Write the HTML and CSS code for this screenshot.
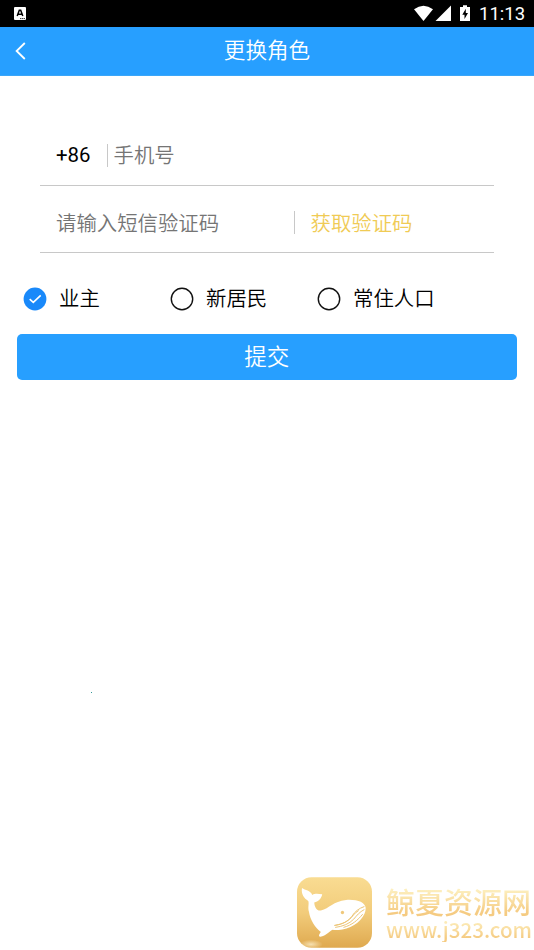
FILE: index.html
```html
<!DOCTYPE html>
<html lang="zh-CN">
<head>
<meta charset="utf-8">
<title>更换角色</title>
<link rel="stylesheet" href="styles.css">
</head>
<body>
<div class="status">
  <svg class="app-icon" viewBox="0 0 12 13"><rect width="12" height="13" rx="1" fill="#fff"/><path d="M3.2 9 5.3 3.2h1.4L8.8 9M4.2 7.2h3.6" fill="none" stroke="#000" stroke-width="1.5"/><path d="M6 11.6h5" stroke="#000" stroke-width=".8" stroke-dasharray="1.5 .5"/></svg>
  <div class="status-right">
    <svg class="signals" viewBox="0 0 58 18"><path d="M0 4.2Q9.5-2.8 19 4.2L9.5 16Z" fill="#fff"/><path d="M37 .5V16H21.500Z" fill="#fff"/><path d="M46 2h3V.3h4V2h3v14H46Z" fill="#fff"/><path d="M51.800 3.800 48.300 9.700h2.200v4.200L54 8h-2.200Z" fill="#000"/></svg>
    <span class="time">11:13</span>
  </div>
</div>
<header class="header">
  <svg class="back" viewBox="0 0 12 18"><path d="M10.800 1 2.600 9l8.200 8" fill="none" stroke="#fff" stroke-width="1.800"/></svg>
  <h1 class="title">更换角色</h1>
</header>
<main class="main">
  <div class="field field-phone">
    <span class="code">+86</span>
    <span class="divider"></span>
    <span class="placeholder">手机号</span>
  </div>
  <div class="field field-sms">
    <span class="placeholder sms">请输入短信验证码</span>
    <span class="divider"></span>
    <span class="get-code">获取验证码</span>
  </div>
  <div class="roles">
    <div class="role"><svg class="radio" viewBox="0 0 24 24"><circle cx="12" cy="12" r="11.400" fill="#1989fa"/><path d="m6.700 12.200 3.600 3.200 7.400-7" fill="none" stroke="#fff" stroke-width="1.600"/></svg><span>业主</span></div>
    <div class="role"><svg class="radio" viewBox="0 0 24 24"><circle cx="12" cy="12" r="10.700" fill="none" stroke="#111" stroke-width="1.400"/></svg><span>新居民</span></div>
    <div class="role"><svg class="radio" viewBox="0 0 24 24"><circle cx="12" cy="12" r="10.700" fill="none" stroke="#111" stroke-width="1.400"/></svg><span>常住人口</span></div>
  </div>
  <div class="submit">提交</div>
</main>
<i class="speck"></i>
<div class="watermark">
  <svg class="whale" viewBox="36 36 226 212">
    <defs><linearGradient id="gold" x1="0" y1="0" x2="0" y2="1"><stop offset="0" stop-color="#f9dc92"/><stop offset=".5" stop-color="#f2cc7b"/><stop offset="1" stop-color="#dfa94f"/></linearGradient>
    <radialGradient id="glow"><stop offset="0" stop-color="#fff6d8" stop-opacity=".7"/><stop offset="1" stop-color="#fff6d8" stop-opacity="0"/></radialGradient></defs>
    <rect x="36" y="36" width="226" height="212" rx="44" fill="url(#gold)"/>
    <ellipse cx="78" cy="238" rx="36" ry="14" fill="url(#glow)"/>
    <path d="M51 68C61 76 76 74 82 89C91 84 100 86 112 87C109 101 100 109 88 112C89 127 96 138 108 136C134 129 145 108 184 104C218 102 241 111 243 128C244 153 218 181 185 190C167 195 154 196 143 194C132 199 125 212 106 215C100 215 102 208 108 201C91 188 76 166 72 140C68 125 73 116 70 107C57 99 48 86 51 68Z" fill="#fff"/>
    <g fill="none" stroke="#ecc575" stroke-width="3"><path d="M239 124C222 130 211 138 201 154C190 169 172 178 151 181"/><path d="M239 133C224 141 217 150 207 162C194 176 174 184 151 187"/><path d="M234 147C219 165 202 180 176 187"/><path d="M222 136C208 144 204 154 194 163C180 174 166 178 148 181"/></g>
    <circle cx="173" cy="142" r="5" fill="#efc87b"/>
  </svg>
  <div class="brand"><div class="brand-name">鲸夏资源网</div><div class="brand-url">www.j323.com</div></div>
</div>
</body>
</html>
```
FILE: styles.css
```css
* { box-sizing: border-box; }
body {
  margin: 0;
  height: 950px;
  overflow: hidden;
  background: #fff;
  color: #111;
  font-family: Roboto, "Noto Sans CJK SC", sans-serif;
  font-weight: 350;
}
svg { display: block; flex: none; }
.status {
  height: 27px;
  padding: 0 9px 0 14px;
  background: #000;
  display: flex;
  align-items: center;
  justify-content: space-between;
}
.app-icon { width: 12px; height: 13px; }
.status-right { display: flex; align-items: center; }
.signals { width: 58px; height: 18px; margin-top: 1px; }
.time {
  width: 46px;
  margin-left: 7px;
  padding-top: 1px;
  color: #fff;
  font-size: 18.5px;
  font-weight: 400;
  line-height: 26px;
  white-space: nowrap;
}
.header {
  height: 49px;
  padding: 0 14px;
  background: #279fff;
  border-bottom: 1px solid #3ba6f8;
  display: grid;
  grid-template-columns: 12px 1fr 12px;
  align-items: center;
}
.back { width: 12px; height: 18px; margin-top: -1px; }
.title {
  margin: 0;
  color: #fff;
  font-size: 21.6px;
  font-weight: 350;
  line-height: 46px;
  text-align: center;
}
.main { padding: 42px 17px 0 16.5px; }
.field {
  height: 67px;
  margin: 0 23.500px;
  padding: 7px 16px 0;
  border-bottom: 1px solid #c8c8c8;
  display: flex;
  align-items: center;
  font-size: 20.4px;
  line-height: 30px;
}
.field-phone { height: 68px; }
.code { width: 50.500px; font-weight: 400; color: #000; }
.divider { width: 1px; height: 23px; background: #c8c8c8; }
.placeholder { margin-left: 6px; padding-top: 2px; color: #757575; }
.sms { width: 237.500px; margin-left: 0; }
.get-code { margin-left: 16px; padding-top: 2px; color: #f0cb55; }
.roles {
  height: 81px;
  padding: 10px 0 0 6.500px;
  display: grid;
  grid-template-columns: 147px 147px 1fr;
  align-items: center;
}
.role {
  display: flex;
  align-items: center;
  gap: 12px;
  color: #000;
  font-size: 20.4px;
  line-height: 30px;
}
.role span { padding-top: 1px; }
.radio { width: 24px; height: 24px; }
.submit {
  height: 45.500px;
  border-radius: 5px;
  background: #279fff;
  color: #fff;
  font-size: 22.500px;
  line-height: 46px;
  text-align: center;
}
.speck { position: absolute; left: 91px; top: 692px; width: 1px; height: 1px; background: #399; }
.watermark {
  position: absolute;
  left: 297px;
  top: 877px;
  display: flex;
}
.whale { width: 75px; height: 71px; }
.brand { margin-left: 14px; white-space: nowrap; }
.brand-name, .brand-url {
  color: transparent;
  background: linear-gradient(#fdf0c0 15%, #f5cb82 85%);
  -webkit-background-clip: text;
  background-clip: text;
  font-family: "Noto Sans CJK SC", sans-serif;
  font-weight: 500;
}
.brand-name {
  font-size: 29px;
  line-height: 34px;
  margin-top: 7px;
}
.brand-url {
  font-size: 20.6px;
  line-height: 26px;
  margin-top: -2px;
}
```
